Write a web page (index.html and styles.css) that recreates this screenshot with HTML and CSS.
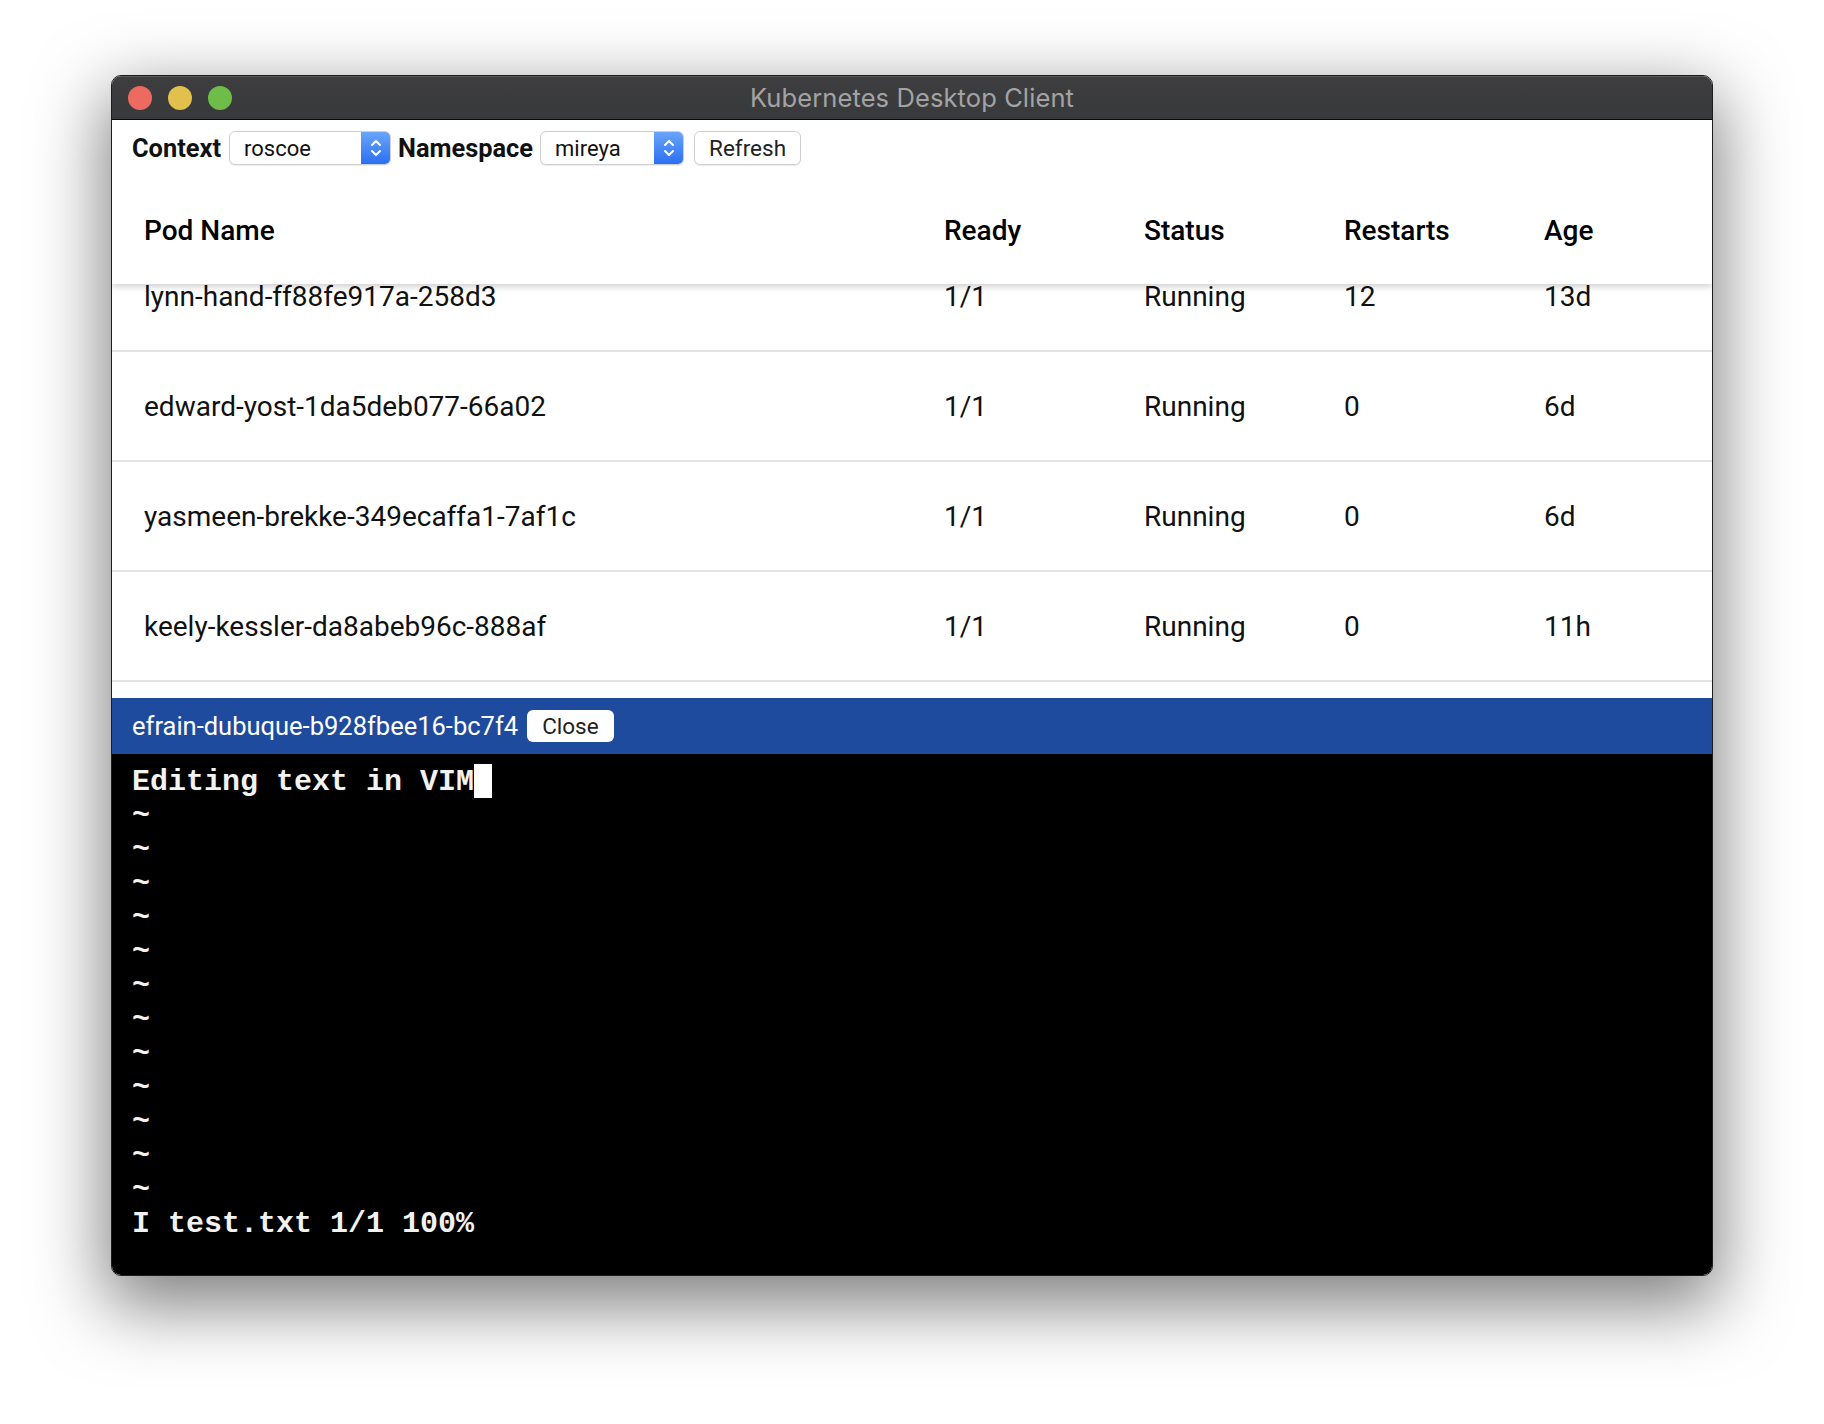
FILE: index.html
```html
<!DOCTYPE html>
<html>
<head>
<meta charset="utf-8">
<title>Kubernetes Desktop Client</title>
<link rel="stylesheet" href="styles.css">
</head>
<body>
<div class="window">
  <div class="titlebar">
    <div class="lights">
      <span class="light red"></span>
      <span class="light yellow"></span>
      <span class="light green"></span>
    </div>
    <div class="title">Kubernetes Desktop Client</div>
    <div></div>
  </div>
  <div class="toolbar">
    <span class="label">Context</span>
    <div class="select select-context">
      <span class="select-value">roscoe</span>
      <span class="select-arrow"><svg width="14" height="22" viewBox="0 0 14 22"><path d="M3 8 L7 4 L11 8" fill="none" stroke="#fff" stroke-width="2" stroke-linecap="round" stroke-linejoin="round"/><path d="M3 14 L7 18 L11 14" fill="none" stroke="#fff" stroke-width="2" stroke-linecap="round" stroke-linejoin="round"/></svg></span>
    </div>
    <span class="label">Namespace</span>
    <div class="select select-ns">
      <span class="select-value">mireya</span>
      <span class="select-arrow"><svg width="14" height="22" viewBox="0 0 14 22"><path d="M3 8 L7 4 L11 8" fill="none" stroke="#fff" stroke-width="2" stroke-linecap="round" stroke-linejoin="round"/><path d="M3 14 L7 18 L11 14" fill="none" stroke="#fff" stroke-width="2" stroke-linecap="round" stroke-linejoin="round"/></svg></span>
    </div>
    <button class="btn">Refresh</button>
  </div>
  <div class="table">
    <div class="thead grid">
      <div class="cell">Pod Name</div>
      <div class="cell">Ready</div>
      <div class="cell">Status</div>
      <div class="cell">Restarts</div>
      <div class="cell">Age</div>
    </div>
    <div class="tbody">
      <div class="row grid">
        <div class="cell">lynn-hand-ff88fe917a-258d3</div>
        <div class="cell">1/1</div>
        <div class="cell">Running</div>
        <div class="cell">12</div>
        <div class="cell">13d</div>
      </div>
      <div class="row grid">
        <div class="cell">edward-yost-1da5deb077-66a02</div>
        <div class="cell">1/1</div>
        <div class="cell">Running</div>
        <div class="cell">0</div>
        <div class="cell">6d</div>
      </div>
      <div class="row grid">
        <div class="cell">yasmeen-brekke-349ecaffa1-7af1c</div>
        <div class="cell">1/1</div>
        <div class="cell">Running</div>
        <div class="cell">0</div>
        <div class="cell">6d</div>
      </div>
      <div class="row grid">
        <div class="cell">keely-kessler-da8abeb96c-888af</div>
        <div class="cell">1/1</div>
        <div class="cell">Running</div>
        <div class="cell">0</div>
        <div class="cell">11h</div>
      </div>
    </div>
  </div>
  <div class="panelbar">
    <span class="panel-title">efrain-dubuque-b928fbee16-bc7f4</span>
    <button class="close-btn">Close</button>
  </div>
  <div class="terminal">
<div class="tline">Editing text in VIM<span class="cursor"> </span></div>
<div class="tline">~</div>
<div class="tline">~</div>
<div class="tline">~</div>
<div class="tline">~</div>
<div class="tline">~</div>
<div class="tline">~</div>
<div class="tline">~</div>
<div class="tline">~</div>
<div class="tline">~</div>
<div class="tline">~</div>
<div class="tline">~</div>
<div class="tline">~</div>
<div class="tline">I test.txt 1/1 100%</div>
  </div>
</div>
</body>
</html>
```
FILE: styles.css
```css
html, body {
  margin: 0;
  padding: 0;
  background: #ffffff;
}
body {
  box-sizing: border-box;
  min-height: 1424px;
  padding: 75px 0 0 111px;
  font-family: Roboto, "Liberation Sans", sans-serif;
}
.window {
  width: 1600px;
  height: 1199px;
  border: 1px solid #1c1c1c;
  border-radius: 10px;
  overflow: hidden;
  display: flex;
  flex-direction: column;
  background: #fff;
  box-shadow: 0 24px 70px 6px rgba(0,0,0,0.5);
}
.titlebar {
  height: 43px;
  flex: none;
  background: linear-gradient(#3e3e40, #38393b);
  border-bottom: 1px solid #0a0a0a;
  box-shadow: inset 0 1px 0 #5a5a5c;
  display: grid;
  grid-template-columns: 1fr auto 1fr;
  align-items: center;
}
.lights {
  display: flex;
  gap: 16px;
  padding-left: 16px;
}
.light {
  width: 24px;
  height: 24px;
  border-radius: 50%;
  display: block;
}
.red { background: #ec6a5f; }
.yellow { background: #e2c04c; }
.green { background: #6fbd48; }
.title {
  font-family: Inter, "Liberation Sans", sans-serif;
  font-size: 25.5px;
  color: #a3a3a3;
  letter-spacing: 0.1px;
}
.toolbar {
  height: 56px;
  flex: none;
  display: flex;
  align-items: center;
  gap: 7px;
  padding-left: 20px;
}
.label {
  font-weight: 700;
  font-size: 25.4px;
  color: #111;
}
.select {
  height: 32px;
  border: 1px solid #cfcfcf;
  border-radius: 6px;
  background: #fff;
  display: flex;
  align-items: center;
  box-shadow: 0 1px 1px rgba(0,0,0,0.08);
  overflow: hidden;
}
.select-context { width: 160px; margin-left: 1px; }
.select-ns { width: 142px; }
.select-value {
  flex: 1;
  padding-left: 14px;
  font-size: 22px;
  color: #111;
}
.select-arrow {
  width: 29px;
  height: 100%;
  background: linear-gradient(#69a5fb, #2b6ff2);
  display: flex;
  align-items: center;
  justify-content: center;
}
.btn {
  height: 34px;
  border: 1px solid #cfcfcf;
  border-radius: 6px;
  background: #fff;
  font-family: Roboto, "Liberation Sans", sans-serif;
  font-size: 22.5px;
  color: #222;
  padding: 0 14px;
  margin-left: 3px;
  box-shadow: 0 1px 1px rgba(0,0,0,0.08);
}
.table {
  height: 522px;
  flex: none;
  overflow: hidden;
}
.grid {
  display: grid;
  grid-template-columns: 800px 200px 200px 200px 200px;
  align-items: center;
}
.cell {
  padding-left: 32px;
  font-size: 28px;
  color: #111;
}
.thead {
  height: 108px;
  position: relative;
  z-index: 2;
  background: #fff;
  box-shadow: 0 2px 7px rgba(0,0,0,0.22);
}
.thead .cell {
  font-weight: 500;
  color: #000;
  padding-top: 1px;
}
.tbody {
  margin-top: -42px;
}
.row {
  height: 108px;
  border-bottom: 2px solid #e3e3e3;
}
.panelbar {
  height: 56px;
  flex: none;
  background: #1f4b9f;
  display: flex;
  align-items: center;
  gap: 9px;
  padding-left: 20px;
}
.panel-title {
  color: #fff;
  font-size: 25.5px;
}
.close-btn {
  height: 32px;
  padding: 0 15px;
  border: none;
  border-radius: 6px;
  background: #fff;
  font-family: Roboto, "Liberation Sans", sans-serif;
  font-size: 22.5px;
  color: #222;
}
.terminal {
  flex: 1;
  background: #000;
  padding: 10px 0 0 20px;
  font-family: "Liberation Mono", "DejaVu Sans Mono", monospace;
  font-size: 30px;
  font-weight: 700;
  line-height: 34px;
  color: #f2f2f2;
}
.tline {
  white-space: pre;
  height: 34px;
  line-height: 37px;
}
.cursor {
  display: inline-block;
  width: 18px;
  height: 34px;
  background: #fff;
  vertical-align: top;
}
```
